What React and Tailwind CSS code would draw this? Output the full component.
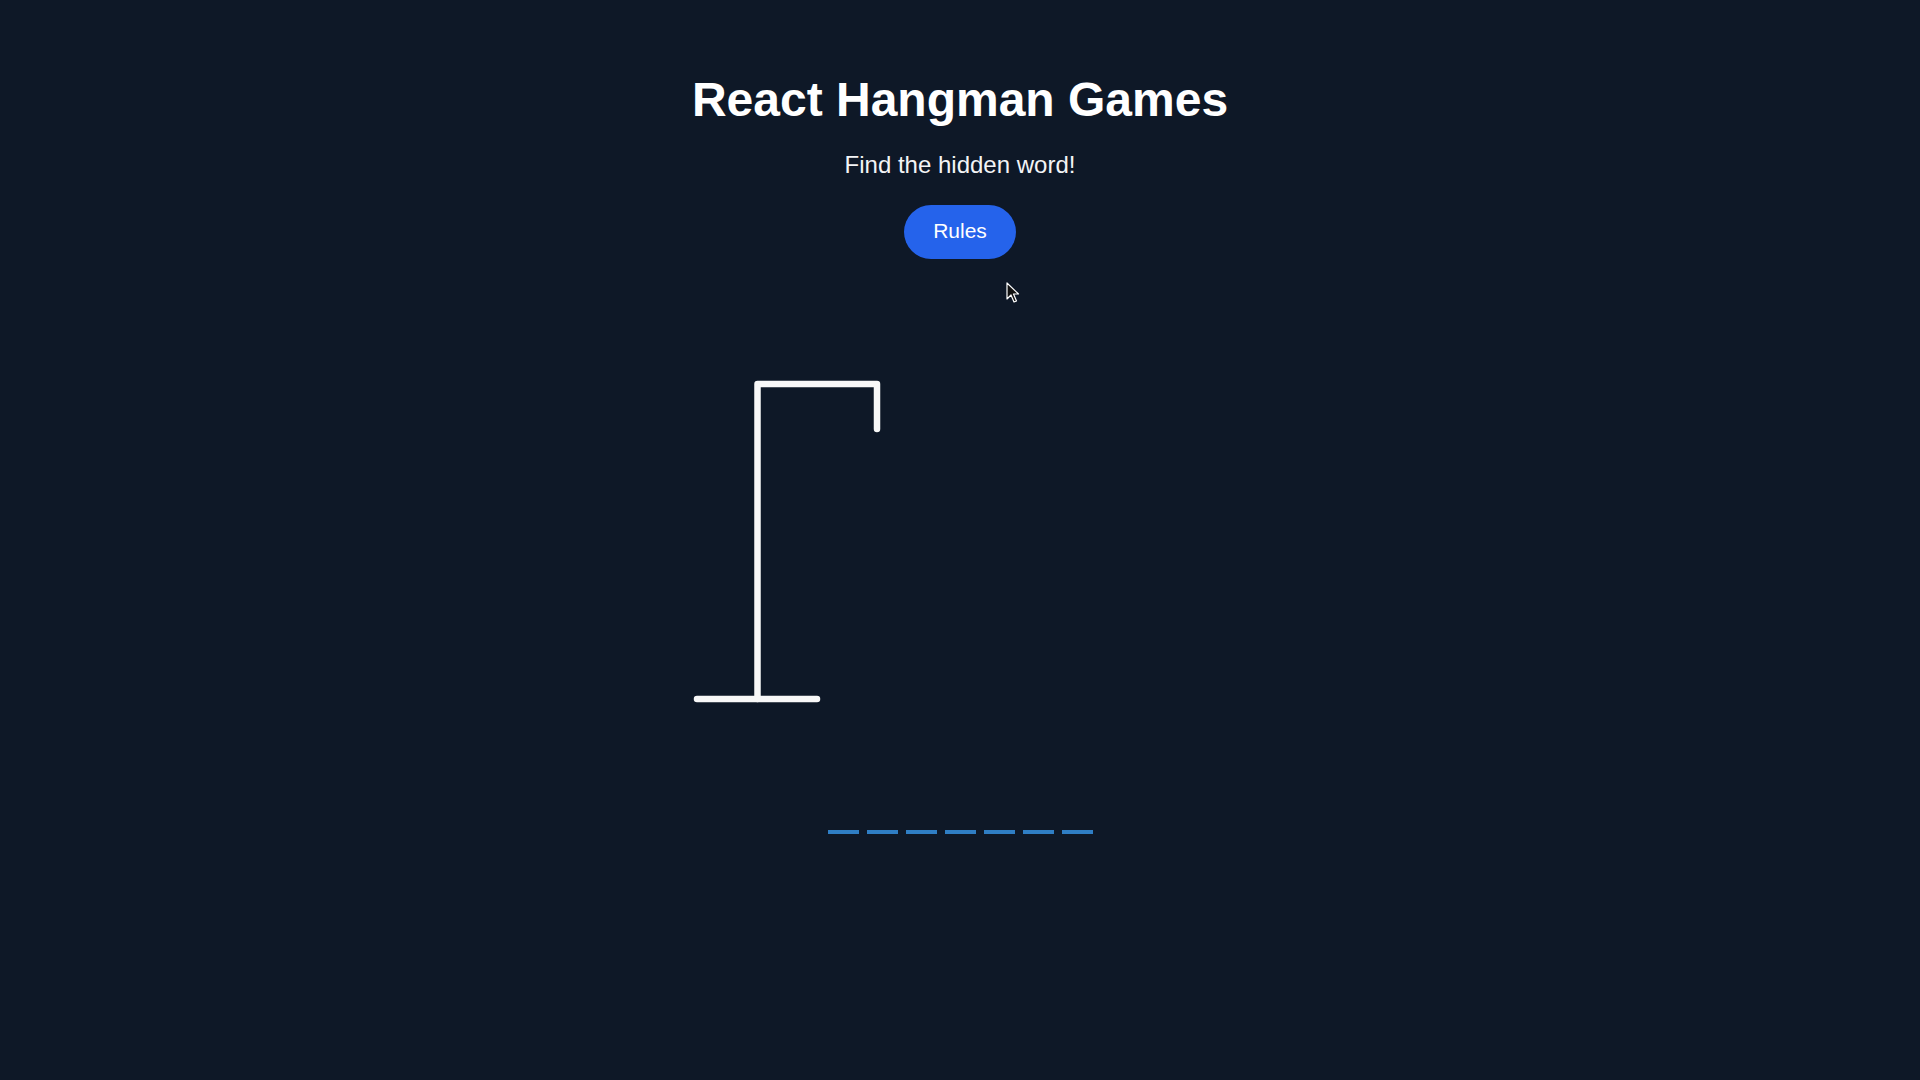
import React from "react";

export default function App() {
  const letters = Array.from({ length: 7 });
  return (
    <div
      className="relative min-h-screen w-full bg-[#0e1827] text-white flex flex-col items-center"
      style={{ fontFamily: '"Liberation Sans", Arial, sans-serif' }}
    >
      <h1 className="pt-[76px] text-[48px] leading-none font-bold text-white">React Hangman Games</h1>
      <p className="mt-[29px] text-[24px] leading-none text-[#f3f4f6]">Find the hidden word!</p>
      <button className="mt-[28px] w-[112px] h-[54px] pb-[3px] rounded-full bg-[#2563eb] text-white text-[21px] leading-none flex items-center justify-center">
        Rules
      </button>

      <svg className="mt-[117px] block" width="540" height="330" viewBox="0 0 540 330">
        <g stroke="#f8f8f8" strokeWidth="6.5" strokeLinecap="round" strokeLinejoin="round" fill="none">
          <polyline points="67.5,323 67.5,8 187,8 187,53" />
          <line x1="7" y1="323" x2="127" y2="323" />
        </g>
      </svg>

      <div className="mt-[124px] flex gap-[8px]">
        {letters.map((_, i) => (
          <div key={i} className="w-[31px] h-[4px] bg-[#2f7ec4]" />
        ))}
      </div>

      <svg
        className="absolute left-[1006px] top-[282px]"
        width="14"
        height="22"
        viewBox="0 0 14 22"
      >
        <path
          d="M1 1 L1 17 L5 13 L8 20 L10.5 19 L7.5 12 L12.5 12 Z"
          fill="#111"
          stroke="#fff"
          strokeWidth="1.2"
          strokeLinejoin="round"
        />
      </svg>
    </div>
  );
}
